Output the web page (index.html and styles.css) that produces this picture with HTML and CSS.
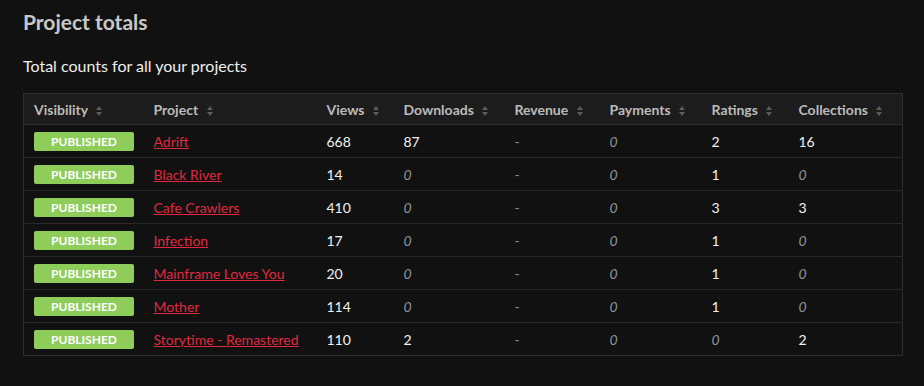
FILE: index.html
```html
<!DOCTYPE html>
<html lang="en">
<head>
  <meta charset="UTF-8" />
  <title>Project totals</title>
  <link rel="stylesheet" href="styles.css">
</head>
<body>
  <h2 class="page-title">Project totals</h2>
  <p class="subtitle">Total counts for all your projects</p>

  <table class="totals">
    <colgroup>
      <col style="width: 119px"><col style="width: 173px"><col style="width: 77px"><col style="width: 111px">
      <col style="width: 95px"><col style="width: 102px"><col style="width: 87px"><col>
    </colgroup>
    <thead>
      <tr>
        <th>Visibility <span class="sort"></span></th>
        <th>Project <span class="sort"></span></th>
        <th>Views <span class="sort"></span></th>
        <th>Downloads <span class="sort"></span></th>
        <th>Revenue <span class="sort"></span></th>
        <th>Payments <span class="sort"></span></th>
        <th>Ratings <span class="sort"></span></th>
        <th>Collections <span class="sort"></span></th>
      </tr>
    </thead>
    <tbody>
      <tr>
        <td><span class="badge">Published</span></td>
        <td><a href="#">Adrift</a></td>
        <td>668</td><td>87</td><td class="dash">-</td><td class="zero">0</td><td>2</td><td>16</td>
      </tr>
      <tr>
        <td><span class="badge">Published</span></td>
        <td><a href="#">Black River</a></td>
        <td>14</td><td class="zero">0</td><td class="dash">-</td><td class="zero">0</td><td>1</td><td class="zero">0</td>
      </tr>
      <tr>
        <td><span class="badge">Published</span></td>
        <td><a href="#">Cafe Crawlers</a></td>
        <td>410</td><td class="zero">0</td><td class="dash">-</td><td class="zero">0</td><td>3</td><td>3</td>
      </tr>
      <tr>
        <td><span class="badge">Published</span></td>
        <td><a href="#">Infection</a></td>
        <td>17</td><td class="zero">0</td><td class="dash">-</td><td class="zero">0</td><td>1</td><td class="zero">0</td>
      </tr>
      <tr>
        <td><span class="badge">Published</span></td>
        <td><a href="#">Mainframe Loves You</a></td>
        <td>20</td><td class="zero">0</td><td class="dash">-</td><td class="zero">0</td><td>1</td><td class="zero">0</td>
      </tr>
      <tr>
        <td><span class="badge">Published</span></td>
        <td><a href="#">Mother</a></td>
        <td>114</td><td class="zero">0</td><td class="dash">-</td><td class="zero">0</td><td>1</td><td class="zero">0</td>
      </tr>
      <tr>
        <td><span class="badge">Published</span></td>
        <td><a href="#">Storytime - Remastered</a></td>
        <td>110</td><td>2</td><td class="dash">-</td><td class="zero">0</td><td class="zero">0</td><td>2</td>
      </tr>
    </tbody>
  </table>
</body>
</html>
```

FILE: styles.css
```css
body {
  margin: 0;
  padding: 10px 21px 0 23px;
  background-color: #111;
  color: #eee;
  font-family: Lato, "Noto Sans", sans-serif;
}

.page-title {
  margin: 0;
  font-size: 21px;
  font-weight: bold;
  color: #c8c8c8;
  line-height: 24px;
}

.subtitle {
  margin: 22px 0 18px;
  font-size: 16px;
  line-height: 19px;
  color: #eee;
}

table.totals {
  width: 880px;
  table-layout: fixed;
  border-collapse: collapse;
  border: 1px solid #2e2e2e;
  font-size: 14px;
}

.totals th {
  height: 30px;
  padding: 0 0 0 11px;
  background-color: #1c1c1c;
  color: #bbb;
  font-weight: bold;
  text-align: left;
  white-space: nowrap;
  border-bottom: 1px solid #2e2e2e;
}

.totals td {
  height: 32px;
  padding: 0 0 0 11px;
  border-bottom: 1px solid #2a2a2a;
  color: #f2f2f2;
  white-space: nowrap;
}

.totals th:first-child,
.totals td:first-child {
  padding-left: 10px;
}

.totals tr:last-child td {
  border-bottom: none;
}

.sort {
  display: inline-block;
  position: relative;
  width: 7px;
  height: 10px;
  margin-left: 5px;
  vertical-align: -1px;
}

.sort::before,
.sort::after {
  content: "";
  position: absolute;
  left: 0;
  border-left: 3.5px solid transparent;
  border-right: 3.5px solid transparent;
}

.sort::before {
  top: 0;
  border-bottom: 4px solid #5c5c5c;
}

.sort::after {
  bottom: 0;
  border-top: 4px solid #5c5c5c;
}

.badge {
  display: block;
  width: 100px;
  height: 19px;
  line-height: 19px;
  border-radius: 2px;
  background-color: #8fcd5a;
  color: #fff;
  font-size: 12px;
  font-weight: bold;
  text-align: center;
  text-transform: uppercase;
}

.totals a {
  color: #e0283f;
  text-decoration: underline;
}

.zero {
  font-style: italic;
  color: #8f949a !important;
}

.dash {
  color: #8a8a8a !important;
}
```
